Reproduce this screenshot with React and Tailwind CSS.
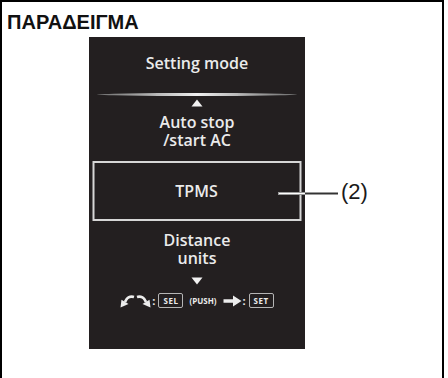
import React from "react";

function CurveLeft() {
  return (
    <svg width="15" height="14" viewBox="0 0 15 14" className="shrink-0">
      <path d="M14 3 C 10 1.8, 6.5 4, 5 8" fill="none" stroke="#ececec" strokeWidth="2.8" />
      <path d="M0.5 13.5 L1.5 5.8 L8.5 10 Z" fill="#ececec" />
    </svg>
  );
}

function CurveRight() {
  return (
    <svg width="15" height="14" viewBox="0 0 15 14" className="shrink-0">
      <path d="M1 3 C 5 1.8, 8.5 4, 10 8" fill="none" stroke="#ececec" strokeWidth="2.8" />
      <path d="M14.5 13.5 L13.5 5.8 L6.5 10 Z" fill="#ececec" />
    </svg>
  );
}

function ArrowRight() {
  return (
    <svg width="19" height="12" viewBox="0 0 19 12" className="shrink-0">
      <path d="M0.5 4.2 H10 V0.5 L18.5 6 L10 11.5 V7.8 H0.5 Z" fill="#ececec" />
    </svg>
  );
}

function KeyBox({ children }) {
  return (
    <span className="flex h-[15px] w-[25px] items-center justify-center rounded-[2px] border border-[#b5b5b5] text-[8px] font-bold leading-none tracking-[0.6px] text-[#ececec]">
      {children}
    </span>
  );
}

function Tri({ down }) {
  return (
    <svg width="12" height="8" viewBox="0 0 12 8" className="block">
      {down ? <path d="M0.5 0.5 H11.5 L6 7.5 Z" fill="#f2f2f2" /> : <path d="M0.5 7.5 H11.5 L6 0.5 Z" fill="#f2f2f2" />}
    </svg>
  );
}

export default function App() {
  return (
    <div className="h-[378px] w-[448px] bg-white font-['Liberation_Sans',Arial,sans-serif]">
      <div className="h-[378px] w-[444px] border-x-2 border-t-2 border-black pl-[5px] pt-[9px]">
        <h1 className="text-[20px] font-bold leading-[22px] text-[#111]">ΠΑΡΑΔΕΙΓΜΑ</h1>

        <div className="relative ml-[82px] mt-[4px] flex h-[312px] w-[216px] flex-col items-center bg-[#231f20] pt-[15px] font-['Open_Sans','Noto_Sans',sans-serif] font-semibold text-[#ebebeb]">
          <div className="text-[16px] leading-[22px]">Setting mode</div>

          <div className="mt-[19px] h-[3px] w-[200px] rounded-[50%] bg-gradient-to-r from-[#6d6d6d] via-[#f0f0f0] to-[#6d6d6d]" />

          <div className="mt-[3px]">
            <Tri />
          </div>

          <div className="mt-[6px] text-center text-[16px] leading-[18px]">
            <div>Auto stop</div>
            <div>/start AC</div>
          </div>

          <div className="mt-[12px] flex h-[60px] w-[209px] -translate-x-[0.5px] items-center justify-center border-2 border-[#d6d6d6] text-[16px]">
            TPMS
          </div>

          <div className="mt-[10px] text-center text-[16px] leading-[18px]">
            <div>Distance</div>
            <div>units</div>
          </div>

          <div className="mt-[10px]">
            <Tri down />
          </div>

          <div className="mt-[8px] flex items-center text-[#ececec]">
            <CurveLeft />
            <span className="w-[1px]" />
            <CurveRight />
            <span className="ml-[1px] mr-[3px] text-[11px] font-bold leading-none">:</span>
            <KeyBox>SEL</KeyBox>
            <span className="ml-[6px] mr-[6px] text-[8px] font-bold leading-none">(PUSH)</span>
            <ArrowRight />
            <span className="ml-[1px] mr-[3px] text-[11px] font-bold leading-none">:</span>
            <KeyBox>SET</KeyBox>
          </div>

          <div className="absolute left-[189px] top-[155px] h-[3px] w-[60px] border border-[#9a9a9a] bg-white" />
          <div className="absolute left-[216px] top-[156px] h-[1px] w-[33px] bg-[#333]" />
          <div className="absolute left-[252px] top-[142px] whitespace-nowrap font-['Liberation_Sans',Arial,sans-serif] text-[22px] font-normal leading-[26px] text-[#1a1a1a]">
            (2)
          </div>
        </div>
      </div>
    </div>
  );
}
